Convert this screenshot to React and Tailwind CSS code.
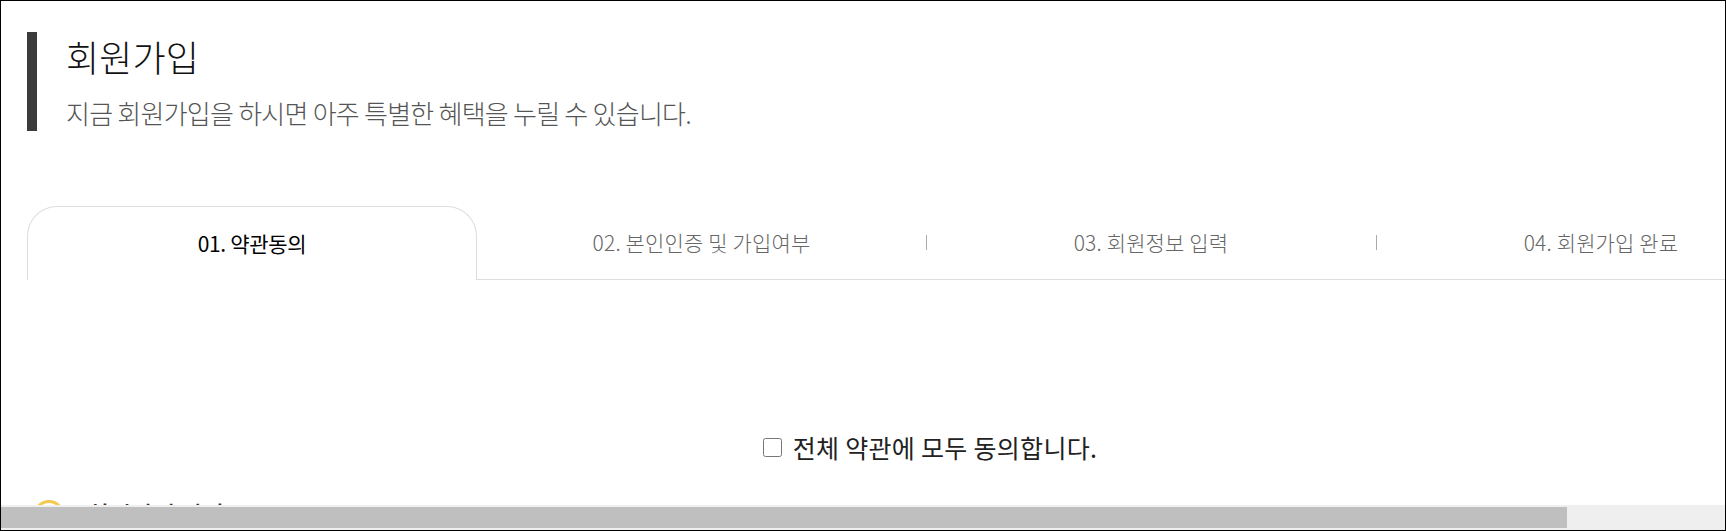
const font = { fontFamily: '"Noto Sans CJK KR", "Noto Sans", sans-serif' }

const steps = [
  { label: '02. 본인인증 및 가입여부', width: 'w-[449px]' },
  { label: '03. 회원정보 입력', width: 'w-[450px]', divider: true },
  { label: '04. 회원가입 완료', width: 'w-[450px]', divider: true },
]

const App = () => {
  return (
    <div className="w-[1726px] h-[531px] bg-white border border-black flex flex-col overflow-hidden" style={font}>
      <div className="flex-1 min-h-0 overflow-hidden">
        <div className="w-[1900px] pl-[26px] pt-[31px]">
          <div className="h-[99px] border-l-[10px] border-[#3c3c3c] pl-[29px]">
            <h1 className="text-[36px] leading-[44px] pt-[2px] font-light text-[#111] tracking-[0.1px]">회원가입</h1>
            <p className="text-[26px] leading-[34px] mt-[18px] font-light text-[#555] tracking-[-0.75px]">지금 회원가입을 하시면 아주 특별한 혜택을 누릴 수 있습니다.</p>
          </div>

          <div className="flex mt-[75px] w-[1800px] h-[74px]">
            <div className="w-[450px] border border-b-0 border-[#ddd] rounded-t-[30px] flex items-center justify-center text-[21px] font-normal text-black tracking-[-0.3px]">
              01. 약관동의
            </div>
            {steps.map((step) => (
              <div key={step.label} className={`${step.width} border-b border-[#ddd] flex items-center justify-center relative text-[21px] font-light text-[#666] tracking-[0.15px]`}>
                {step.divider && <span className="absolute left-0 top-[29px] w-px h-[15px] bg-[#aaa]" />}
                {step.label}
              </div>
            ))}
          </div>

          <label className="flex items-center justify-center gap-[11px] mt-[151px] w-[1806px] text-[25px] leading-[32px] text-[#222] tracking-[0.3px]">
            <input type="checkbox" className="w-[19px] h-[19px] m-0" />
            전체 약관에 모두 동의합니다.
          </label>

          <div className="flex items-start gap-[12px] mt-[37px] pl-[6px]">
            <span className="w-[32px] h-[32px] rounded-full border-[3px] border-[#f3c94e]" />
            <span className="text-[24px] leading-[32px] -mt-[2px] ml-[10px] font-medium text-[#333]">회원가입 약관</span>
          </div>
        </div>
      </div>

      <div className="h-[25px] bg-[#efefef] pt-[2px] pb-[2px] shrink-0">
        <div className="h-full w-[1566px] bg-[#bfbfbf]" />
      </div>
    </div>
  )
}

export default App
